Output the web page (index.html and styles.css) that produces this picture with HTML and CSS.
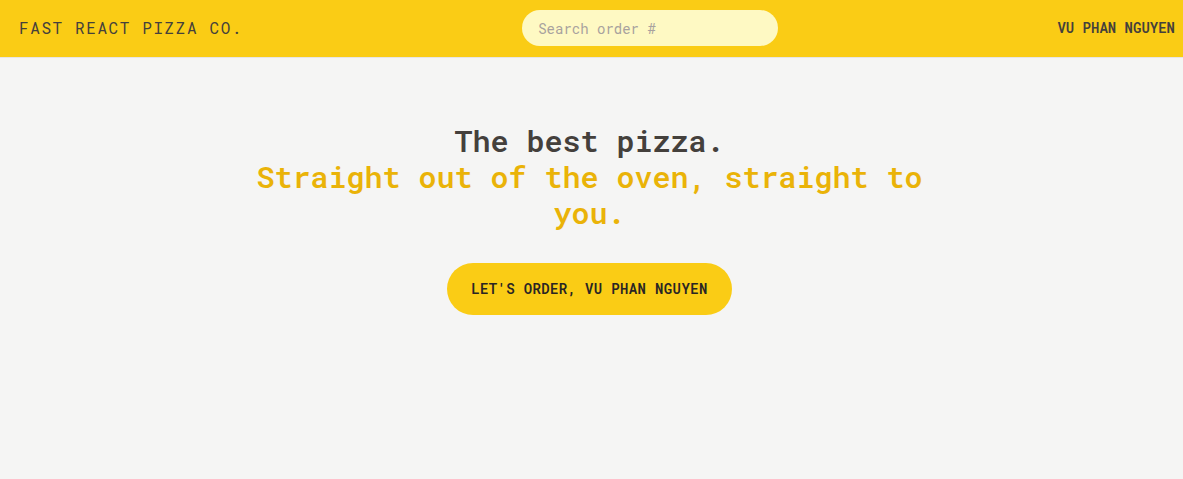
FILE: index.html
```html
<!DOCTYPE html>
<html lang="en">
<head>
<meta charset="utf-8">
<title>Fast React Pizza Co.</title>
<link rel="stylesheet" href="styles.css">
</head>
<body>
<div class="layout">
  <header class="header">
    <a class="logo" href="#">Fast React Pizza Co.</a>
    <form class="search-form">
      <input class="search" type="text" placeholder="Search order #">
    </form>
    <div class="username">Vu Phan Nguyen</div>
  </header>
  <main class="main">
    <div class="home">
      <h1 class="title">The best pizza.<br><span class="accent">Straight out of the oven, straight to you.</span></h1>
      <a class="btn" href="#">Let's order, Vu Phan Nguyen</a>
    </div>
  </main>
</div>
</body>
</html>
```
FILE: styles.css
```css
* { box-sizing: border-box; }
html, body { margin: 0; padding: 0; }
body {
  background: #f5f5f4;
  color: #44403c;
  font-family: "Roboto Mono", "DejaVu Sans Mono", "Liberation Mono", monospace;
  height: 479px;
}
.layout { display: flex; flex-direction: column; min-height: 100%; }
.header {
  display: flex;
  align-items: center;
  justify-content: space-between;
  padding: 10px 8px 11px 19px;
  background: #facc15;
  border-bottom: 1px solid #e7e5e4;
  text-transform: uppercase;
}
.logo {
  color: #44403c;
  text-decoration: none;
  font-size: 16px;
  line-height: 24px;
  letter-spacing: 0.1em;
}
.search-form { display: flex; }
.search {
  width: 256px;
  height: 36px;
  border: none;
  border-radius: 9999px;
  background: #fef9c3;
  padding: 8px 16px;
  font-family: inherit;
  font-size: 14px;
  line-height: 20px;
  color: #44403c;
  outline: none;
}
.search::placeholder { color: #a8a29e; }
.username {
  font-size: 14px;
  line-height: 20px;
  font-weight: 600;
}
.main { display: flex; justify-content: center; padding: 0 20px 0 16px; }
.home {
  margin: 65px 0 64px;
  text-align: center;
  max-width: 700px;
}
.title {
  margin: 0 0 32px;
  font-size: 30px;
  line-height: 36px;
  font-weight: 600;
}
.accent { color: #eab308; }
.btn {
  display: inline-block;
  background: #facc15;
  color: #292524;
  text-decoration: none;
  text-transform: uppercase;
  letter-spacing: 0.025em;
  font-weight: 600;
  font-size: 14px;
  line-height: 20px;
  padding: 16px 24px;
  border-radius: 9999px;
}
```
